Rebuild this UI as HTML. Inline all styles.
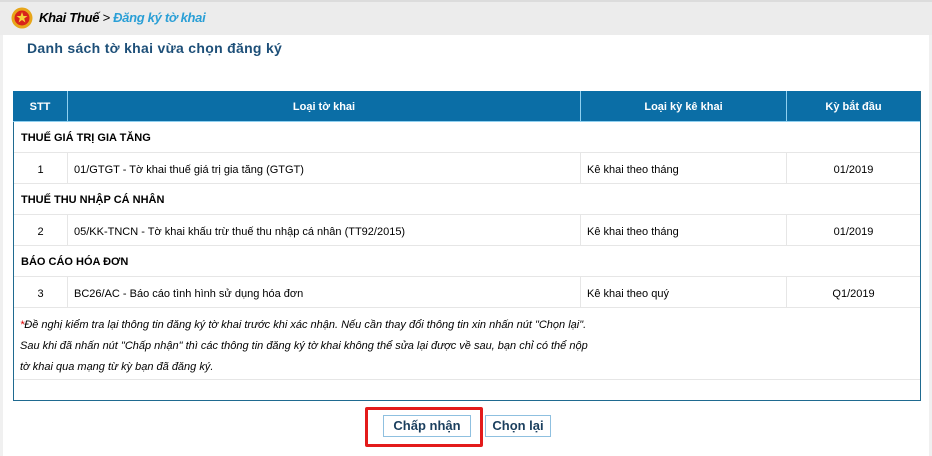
<!DOCTYPE html>
<html><head><meta charset="utf-8"><style>
*{margin:0;padding:0;box-sizing:border-box}
body{width:932px;height:456px;background:#fff;font-family:"Liberation Sans",Arial,sans-serif;position:relative;overflow:hidden;font-size:11px;color:#000}
.a{position:absolute}
.top{left:0;top:0;width:932px;height:35px;background:#ececec;border-top:2px solid #dcdcdc}
.h{border-bottom:1px solid #e6e6e6}
.hd{background:#0b6ea6;color:#fff;font-weight:bold;font-size:11px;height:31px;line-height:33px;text-align:center}
.c{height:31px;line-height:31px;font-size:11px}
.btn{border:1px solid #8fc0e0;background:#fff;color:#1b3f5e;font-weight:bold;font-size:13px;text-align:center;height:22px;line-height:20px}
</style></head><body>
<div class="a" style="left:0;top:35px;width:3px;height:421px;background:#f0f0f0"></div>
<div class="a" style="right:0;top:35px;width:3px;height:421px;background:#f0f0f0"></div>
<div class="a top"></div>
<svg class="a" style="left:11px;top:7px" width="22" height="22"><circle cx="11" cy="11" r="10.5" fill="#e8a61a"/><circle cx="11" cy="11" r="7.5" fill="#d8231b"/><polygon points="11,5 12.4,9 16.5,9 13.2,11.5 14.4,15.5 11,13 7.6,15.5 8.8,11.5 5.5,9 9.6,9" fill="#f5d33a"/></svg>
<div class="a" style="left:39px;top:10px;font-size:13px;font-style:italic;font-weight:bold;letter-spacing:-0.3px">Khai Thuế <span style="font-weight:normal">&gt;</span> <span style="color:#2a9fd6">Đăng ký tờ khai</span></div>
<div class="a" style="left:27px;top:40px;font-size:14px;font-weight:bold;color:#1d4f78;letter-spacing:0.3px">Danh sách tờ khai vừa chọn đăng ký</div>

<div class="a" style="left:13px;top:91px;width:908px;height:310px;border:1px solid #1f6a90;border-top:none"></div>
<div class="a hd" style="left:13px;top:91px;width:54px">STT</div>
<div class="a hd" style="left:68px;top:91px;width:512px">Loại tờ khai</div>
<div class="a hd" style="left:581px;top:91px;width:205px">Loại kỳ kê khai</div>
<div class="a hd" style="left:787px;top:91px;width:133px">Kỳ bắt đầu</div>
<div class="a" style="left:67px;top:91px;width:1px;height:31px;background:#8fd0f0"></div>
<div class="a" style="left:580px;top:91px;width:1px;height:31px;background:#8fd0f0"></div>
<div class="a" style="left:786px;top:91px;width:1px;height:31px;background:#8fd0f0"></div>
<div class="a" style="left:13px;top:121px;width:907px;height:1px;background:#8fd0f0"></div>

<div class="a c h" style="left:14px;top:122px;width:906px;padding-left:7px;font-weight:bold;line-height:33px">THUẾ GIÁ TRỊ GIA TĂNG</div>
<div class="a c h" style="left:14px;top:153px;width:906px"></div>
<div class="a c h" style="left:14px;top:184px;width:906px;padding-left:7px;font-weight:bold;line-height:33px">THUẾ THU NHẬP CÁ NHÂN</div>
<div class="a c h" style="left:14px;top:215px;width:906px"></div>
<div class="a c h" style="left:14px;top:246px;width:906px;padding-left:7px;font-weight:bold;line-height:33px">BÁO CÁO HÓA ĐƠN</div>
<div class="a c h" style="left:14px;top:277px;width:906px"></div>
<div class="a h" style="left:14px;top:308px;width:906px;height:72px"></div>

<div class="a" style="left:67px;top:153px;width:1px;height:31px;background:#e6e6e6"></div>
<div class="a" style="left:580px;top:153px;width:1px;height:31px;background:#e6e6e6"></div>
<div class="a" style="left:786px;top:153px;width:1px;height:31px;background:#e6e6e6"></div>
<div class="a" style="left:67px;top:215px;width:1px;height:31px;background:#e6e6e6"></div>
<div class="a" style="left:580px;top:215px;width:1px;height:31px;background:#e6e6e6"></div>
<div class="a" style="left:786px;top:215px;width:1px;height:31px;background:#e6e6e6"></div>
<div class="a" style="left:67px;top:277px;width:1px;height:31px;background:#e6e6e6"></div>
<div class="a" style="left:580px;top:277px;width:1px;height:31px;background:#e6e6e6"></div>
<div class="a" style="left:786px;top:277px;width:1px;height:31px;background:#e6e6e6"></div>

<div class="a c" style="left:14px;top:155px;width:53px;text-align:center">1</div>
<div class="a c" style="left:74px;top:155px">01/GTGT - Tờ khai thuế giá trị gia tăng (GTGT)</div>
<div class="a c" style="left:587px;top:155px">Kê khai theo tháng</div>
<div class="a c" style="left:787px;top:155px;width:133px;text-align:center">01/2019</div>
<div class="a c" style="left:14px;top:217px;width:53px;text-align:center">2</div>
<div class="a c" style="left:74px;top:217px">05/KK-TNCN - Tờ khai khấu trừ thuế thu nhập cá nhân (TT92/2015)</div>
<div class="a c" style="left:587px;top:217px">Kê khai theo tháng</div>
<div class="a c" style="left:787px;top:217px;width:133px;text-align:center">01/2019</div>
<div class="a c" style="left:14px;top:279px;width:53px;text-align:center">3</div>
<div class="a c" style="left:74px;top:279px">BC26/AC - Báo cáo tình hình sử dụng hóa đơn</div>
<div class="a c" style="left:587px;top:279px">Kê khai theo quý</div>
<div class="a c" style="left:787px;top:279px;width:133px;text-align:center">Q1/2019</div>

<div class="a" style="left:20px;top:315px;font-size:11px;font-style:italic;line-height:21px;letter-spacing:0"><span style="color:#d00">*</span>Đề nghị kiểm tra lại thông tin đăng ký tờ khai trước khi xác nhận. Nếu cần thay đổi thông tin xin nhấn nút "Chọn lại".<br>Sau khi đã nhấn nút "Chấp nhận" thì các thông tin đăng ký tờ khai không thể sửa lại được về sau, bạn chỉ có thể nộp<br>tờ khai qua mạng từ kỳ bạn đã đăng ký.</div>

<div class="a btn" style="left:383px;top:415px;width:88px">Chấp nhận</div>
<div class="a btn" style="left:485px;top:415px;width:66px">Chọn lại</div>
<div class="a" style="left:365px;top:407px;width:118px;height:40px;border:3px solid #e31b1b;border-radius:2px"></div>
</body></html>
